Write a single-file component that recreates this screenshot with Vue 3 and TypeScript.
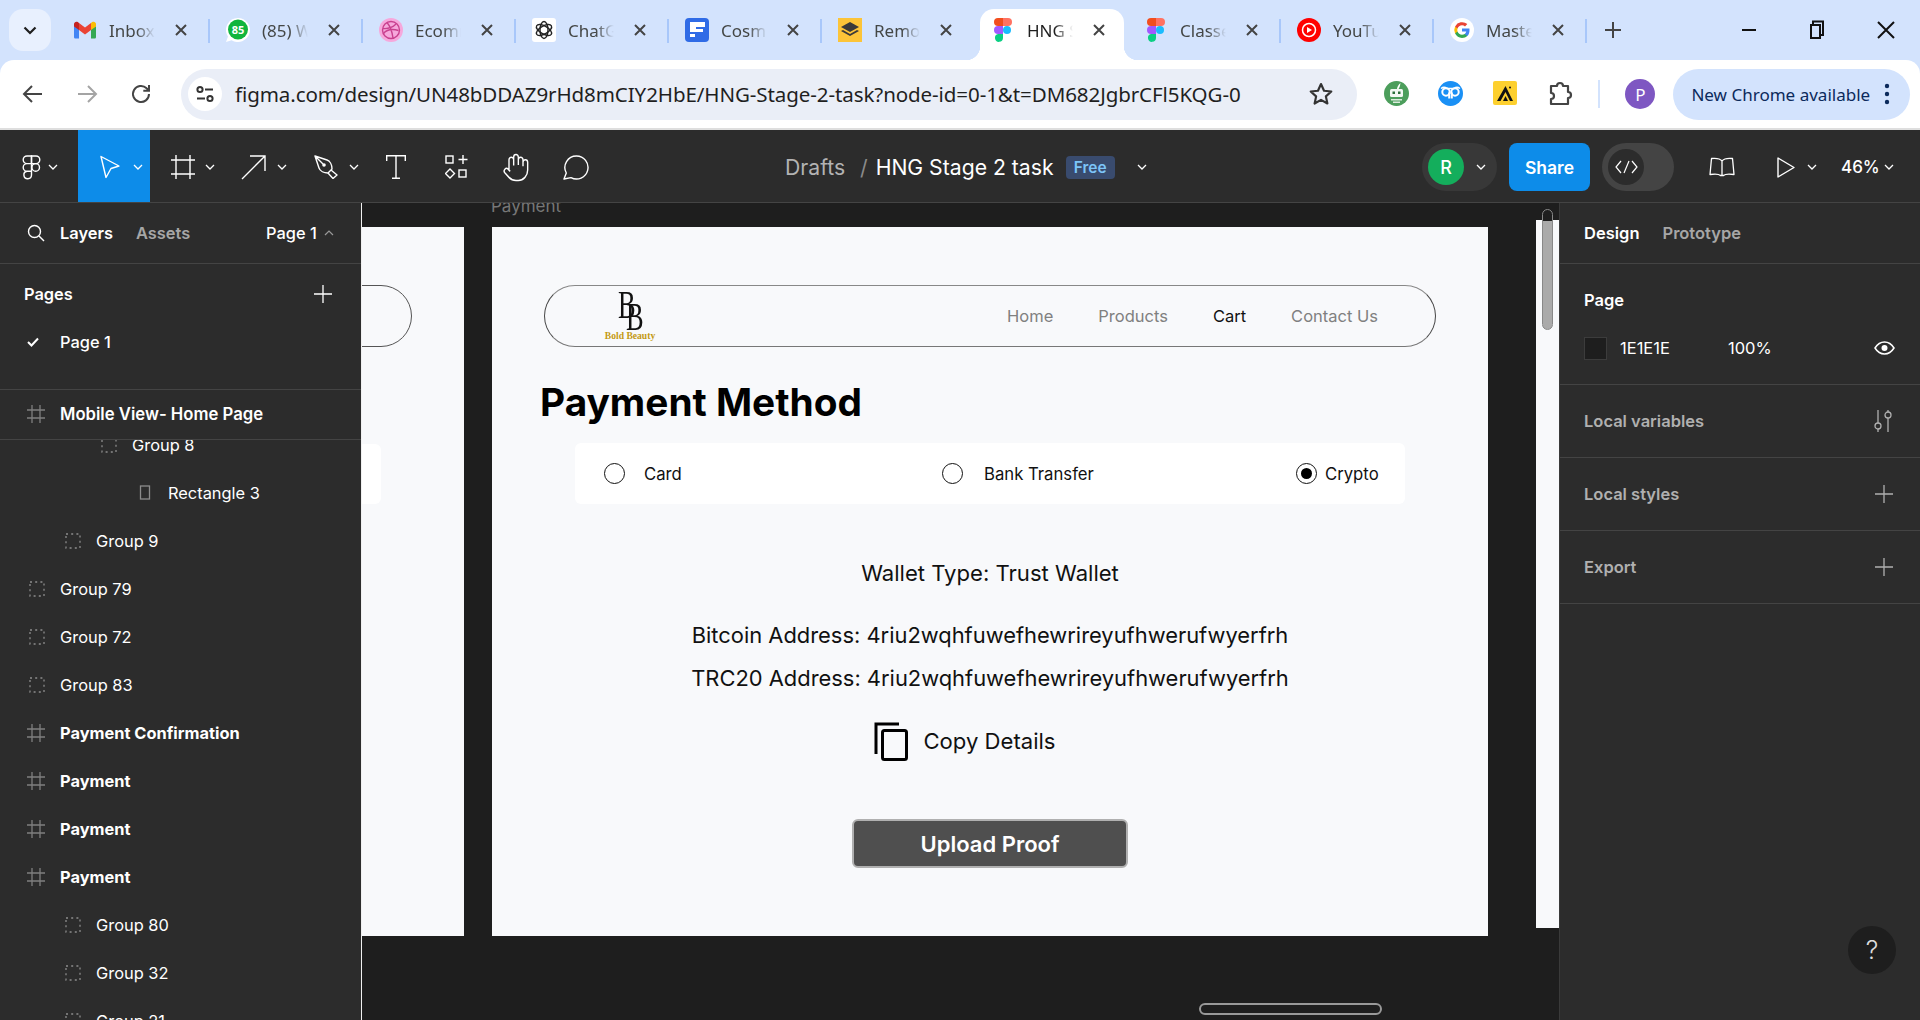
<script setup lang="ts">
interface Tab { title: string; icon: string; active?: boolean; noSep?: boolean }
const tabs: Tab[] = [
  { title: 'Inbox (2)', icon: 'gmail' },
  { title: '(85) WhatsApp', icon: 'whatsapp' },
  { title: 'Ecommerce', icon: 'dribbble' },
  { title: 'ChatGPT', icon: 'chatgpt' },
  { title: 'Cosmos', icon: 'cosmos' },
  { title: 'Remote', icon: 'remote', noSep: true },
  { title: 'HNG Stage', icon: 'figma', active: true, noSep: true },
  { title: 'Classes', icon: 'figma' },
  { title: 'YouTube', icon: 'youtube' },
  { title: 'Master', icon: 'google' },
]
interface Row { name: string; kind: 'group' | 'frame' | 'rect'; depth: number }
const rows: Row[] = [
  { name: 'Group 8', kind: 'group', depth: 2 },
  { name: 'Rectangle 3', kind: 'rect', depth: 3 },
  { name: 'Group 9', kind: 'group', depth: 1 },
  { name: 'Group 79', kind: 'group', depth: 0 },
  { name: 'Group 72', kind: 'group', depth: 0 },
  { name: 'Group 83', kind: 'group', depth: 0 },
  { name: 'Payment Confirmation', kind: 'frame', depth: 0 },
  { name: 'Payment', kind: 'frame', depth: 0 },
  { name: 'Payment', kind: 'frame', depth: 0 },
  { name: 'Payment', kind: 'frame', depth: 0 },
  { name: 'Group 80', kind: 'group', depth: 1 },
  { name: 'Group 32', kind: 'group', depth: 1 },
  { name: 'Group 21', kind: 'group', depth: 1 },
]
const navLinks = ['Home', 'Products', 'Cart', 'Contact Us']
const indent = (d: number) => ({ paddingLeft: `${29 + d * 36}px` })
</script>

<template>
  <div class="page">
    <!-- Chrome tab strip -->
    <div class="tabstrip">
      <div class="switcher">
        <svg width="14" height="9" viewBox="0 0 14 9"><path d="M1.5 1.5 7 7l5.5-5.5" fill="none" stroke="#1f1f1f" stroke-width="2.2"/></svg>
      </div>
      <div v-for="t in tabs" :key="t.title" class="tab" :class="{ active: t.active }">
        <template v-if="t.active">
          <span class="flare flare-l"></span><span class="flare flare-r"></span>
        </template>
        <span class="favicon">
          <svg v-if="t.icon === 'gmail'" width="24" height="18" viewBox="0 0 24 18"><path d="M1 5v11c0 1 .6 1.6 1.6 1.6H6V8z" fill="#4285f4"/><path d="M23 5v11c0 1-.6 1.6-1.6 1.6H18V8z" fill="#34a853"/><path d="M18 2v7l5-3.6V3c0-2-2.300-3-3.800-1.900z" fill="#fbbc04"/><path d="M6 9V2l6 4.500L18 2v7l-6 4.500z" fill="#ea4335"/><path d="M1 3v2.400L6 9V2L4.800 1.100C3.300 0 1 1 1 3z" fill="#c5221f"/></svg>
          <svg v-else-if="t.icon === 'whatsapp'" width="24" height="24" viewBox="0 0 24 24"><path d="M12 0a12 12 0 0 0-10 18.600L0 24l5.600-1.800A12 12 0 1 0 12 0z" fill="#fff"/><circle cx="12" cy="11.500" r="10" fill="#10b53d"/><text x="12" y="15.500" class="wa">85</text></svg>
          <svg v-else-if="t.icon === 'dribbble'" width="24" height="24" viewBox="0 0 24 24"><circle cx="12" cy="12" r="12" fill="#f6a8dc"/><g fill="none" stroke="#c9418f" stroke-width="1.400"><circle cx="12" cy="12" r="8.500"/><path d="M8 4.500c3 3.500 5 8 6 15.500M4 10.500c5 .5 9-.5 13-4.500M4.500 15.500c3-3.500 8-5 15-3"/></g></svg>
          <svg v-else-if="t.icon === 'chatgpt'" width="24" height="24" viewBox="0 0 24 24"><rect width="24" height="24" rx="3" fill="#fff"/><g fill="none" stroke="#222" stroke-width="1.400"><ellipse cx="12" cy="12" rx="4" ry="8.500"/><ellipse cx="12" cy="12" rx="4" ry="8.500" transform="rotate(60 12 12)"/><ellipse cx="12" cy="12" rx="4" ry="8.500" transform="rotate(120 12 12)"/></g></svg>
          <svg v-else-if="t.icon === 'cosmos'" width="24" height="24" viewBox="0 0 24 24"><rect width="24" height="24" rx="4" fill="#2f6be6"/><path d="M5 4h15v5h-9v2h7v3H5zM5 16h5v3H5z" fill="#fff"/></svg>
          <svg v-else-if="t.icon === 'remote'" width="24" height="24" viewBox="0 0 24 24"><rect width="24" height="24" fill="#fcc438"/><path d="m12 4 9 5-9 5-9-5z" fill="#3a3a3a"/><path d="m3 13 9 5 9-5-2-1-7 4-7-4z" fill="#3a3a3a"/></svg>
          <svg v-else-if="t.icon === 'figma'" width="24" height="24" viewBox="0 0 24 24"><path d="M7 0h5v8H7a4 4 0 0 1 0-8z" fill="#f24e1e"/><path d="M12 0h5a4 4 0 0 1 0 8h-5z" fill="#ff7262"/><path d="M7 8h5v8H7a4 4 0 0 1 0-8z" fill="#a259ff"/><circle cx="16" cy="12" r="4" fill="#1abcfe"/><path d="M7 16h5v4a4 4 0 1 1-5-4z" fill="#0acf83"/></svg>
          <svg v-else-if="t.icon === 'youtube'" width="24" height="24" viewBox="0 0 24 24"><circle cx="12" cy="12" r="12" fill="#f00"/><circle cx="12" cy="12" r="6.500" fill="none" stroke="#fff" stroke-width="1.500"/><path d="m10 9 5 3-5 3z" fill="#fff"/></svg>
          <svg v-else width="24" height="24" viewBox="0 0 24 24"><circle cx="12" cy="12" r="12" fill="#fff"/><path d="M19.500 12.200c0-.6 0-1.100-.1-1.600H12v3h4.300a3.700 3.700 0 0 1-1.600 2.400v2h2.600c1.500-1.400 2.200-3.400 2.200-5.800z" fill="#4285f4"/><path d="M12 20c2.200 0 4-.7 5.300-2l-2.600-2c-.7.500-1.600.8-2.700.8-2.100 0-3.800-1.400-4.500-3.300H5.100v2.100A8 8 0 0 0 12 20z" fill="#34a853"/><path d="M7.500 13.500a4.800 4.800 0 0 1 0-3V8.400H5.100a8 8 0 0 0 0 7.200z" fill="#fbbc04"/><path d="M12 7.200c1.200 0 2.200.4 3 1.200l2.300-2.300A8 8 0 0 0 5.100 8.400l2.400 2.100C8.200 8.600 9.900 7.200 12 7.200z" fill="#ea4335"/></svg>
        </span>
        <span class="tab-title">{{ t.title }}</span>
        <svg class="tab-x" width="14" height="14" viewBox="0 0 14 14"><path d="m2 2 10 10M12 2 2 12" stroke="#444" stroke-width="2"/></svg>
        <span v-if="!t.noSep" class="tab-sep"></span>
      </div>
      <svg class="newtab" width="18" height="18" viewBox="0 0 18 18"><path d="M9 1v16M1 9h16" stroke="#444" stroke-width="2"/></svg>
      <div class="winctl">
        <svg width="16" height="16" viewBox="0 0 16 16"><path d="M1 8h14" stroke="#111" stroke-width="2"/></svg>
        <svg width="16" height="20" viewBox="0 0 16 20"><path d="M4 5V1.500h10V15h-3M2 5h9v13H2z" fill="none" stroke="#111" stroke-width="2"/></svg>
        <svg width="18" height="18" viewBox="0 0 18 18"><path d="m1 1 16 16M17 1 1 17" stroke="#111" stroke-width="2"/></svg>
      </div>
    </div>

    <!-- Chrome toolbar -->
    <div class="toolbar">
      <div class="nav-btn"><svg width="24" height="24" viewBox="0 0 24 24"><path d="M21 12H4m7-8-8 8 8 8" fill="none" stroke="#444" stroke-width="2"/></svg></div>
      <div class="nav-btn"><svg width="24" height="24" viewBox="0 0 24 24"><path d="M3 12h17m-7-8 8 8-8 8" fill="none" stroke="#a4a4a4" stroke-width="2"/></svg></div>
      <div class="nav-btn"><svg width="24" height="24" viewBox="0 0 24 24"><path d="M20 12a8 8 0 1 1-2.400-5.700L20 8.500M20 3v5.700h-5.700" fill="none" stroke="#444" stroke-width="2"/></svg></div>
      <div class="address">
        <span class="site-ico"><svg width="20" height="20" viewBox="0 0 20 20"><g fill="none" stroke="#333" stroke-width="2"><circle cx="5" cy="5.500" r="2.600"/><path d="M10 5.500h8M2 14.500h8"/><circle cx="15" cy="14.500" r="2.600"/></g></svg></span>
        <span class="url">figma.com/design/UN48bDDAZ9rHd8mCIY2HbE/HNG-Stage-2-task?node-id=0-1&amp;t=DM682JgbrCFl5KQG-0</span>
        <svg class="star" width="26" height="26" viewBox="0 0 24 24"><path d="m12 2.800 2.800 6.200 6.700.7-5 4.500 1.400 6.600L12 17.400l-5.900 3.400 1.400-6.600-5-4.500 6.700-.7z" fill="none" stroke="#333" stroke-width="2" stroke-linejoin="round"/></svg>
      </div>
      <div class="exts">
        <span class="ext"><svg width="25" height="25" viewBox="0 0 25 25"><circle cx="12.500" cy="12.500" r="12.500" fill="#4c9e5c"/><path d="M13 8c.3-2.500 1.500-4.500 3.500-6-.3 2.500-1 4.500-2 6z" fill="#fff"/><rect x="6" y="8" width="13" height="8" rx="1.500" fill="#f2f8f3"/><rect x="8.500" y="10.500" width="2.500" height="2.500" fill="#2b6e3a"/><rect x="14" y="10.500" width="2.500" height="2.500" fill="#2b6e3a"/><path d="M7 18h11v1.500H7zM9 20.500h7V22H9z" fill="#dcebdd"/></svg></span>
        <span class="ext"><svg width="25" height="25" viewBox="0 0 25 25"><circle cx="12.500" cy="12.500" r="12.500" fill="#1a90f5"/><g fill="none" stroke="#fff" stroke-width="2"><circle cx="8" cy="11" r="3.700"/><circle cx="17" cy="11" r="3.700"/><path d="M11.200 11.500v6M13.800 11.500v6"/></g><path d="M3 7.500c2-1.500 4-1.500 6 0h7c2-1.500 4-1.500 6 0" fill="none" stroke="#fff" stroke-width="1.500"/></svg></span>
        <span class="ext"><svg width="24" height="24" viewBox="0 0 24 24"><rect width="24" height="24" rx="2" fill="#fdd02f"/><path d="M12.500 5 4 20h3.500l5-9 4.500 9h3z" fill="#111"/><path d="M12.500 15 10 20h5z" fill="#111"/><circle cx="17" cy="6.500" r="1" fill="#111"/></svg></span>
        <span class="ext"><svg width="26" height="26" viewBox="0 0 26 26"><path d="M4 5h6a3 3 0 0 1 6 0h5v6a3 3 0 0 1 0 6v6H4v-5a3 3 0 0 0 0-6z" fill="none" stroke="#444" stroke-width="2.200" stroke-linejoin="round"/></svg></span>
      </div>
      <span class="tb-sep"></span>
      <span class="profile">P</span>
      <div class="update">
        <span>New Chrome available</span>
        <svg width="6" height="22" viewBox="0 0 6 22"><circle cx="3" cy="3" r="2.200" fill="#0b2a5c"/><circle cx="3" cy="11" r="2.200" fill="#0b2a5c"/><circle cx="3" cy="19" r="2.200" fill="#0b2a5c"/></svg>
      </div>
    </div>

    <!-- Figma bar -->
    <div class="fbar">
      <div class="tool logo-tool">
        <svg width="19" height="25" viewBox="0 0 19 25" class="ico"><g fill="none" stroke="#fff" stroke-width="1.400"><path d="M9.500 1H5a3.800 3.800 0 0 0 0 7.600h4.500zM9.500 8.600H5a3.800 3.800 0 0 0 0 7.600h4.500zM9.500 16.200H5a3.800 3.800 0 1 0 4.500 3.800z"/><path d="M9.500 1H14a3.800 3.800 0 0 1 0 7.600H9.500z"/><circle cx="13.700" cy="12.400" r="3.800"/></g></svg>
        <svg class="chev" width="10" height="6" viewBox="0 0 10 6"><path d="m1 1 4 4 4-4" fill="none" stroke="#fff" stroke-width="1.300"/></svg>
      </div>
      <div class="tool tool-on">
        <svg width="20" height="24" viewBox="0 0 20 24" class="ico"><path d="M1 1.500 19 11l-8 2.500-5 9z" fill="none" stroke="#fff" stroke-width="1.400" stroke-linejoin="round"/></svg>
        <svg class="chev" width="10" height="6" viewBox="0 0 10 6"><path d="m1 1 4 4 4-4" fill="none" stroke="#fff" stroke-width="1.300"/></svg>
      </div>
      <div class="tool t-frame">
        <svg width="24" height="24" viewBox="0 0 24 24" class="ico"><path d="M0 5h24M0 19h24M5 0v24M19 0v24" stroke="#fff" stroke-width="1.400"/></svg>
        <svg class="chev" width="10" height="6" viewBox="0 0 10 6"><path d="m1 1 4 4 4-4" fill="none" stroke="#fff" stroke-width="1.300"/></svg>
      </div>
      <div class="tool t-arrow">
        <svg width="25" height="25" viewBox="0 0 25 25" class="ico"><path d="M1 24 24 1M9 1h15v15" fill="none" stroke="#fff" stroke-width="1.400"/></svg>
        <svg class="chev" width="10" height="6" viewBox="0 0 10 6"><path d="m1 1 4 4 4-4" fill="none" stroke="#fff" stroke-width="1.300"/></svg>
      </div>
      <div class="tool">
        <svg width="24" height="24" viewBox="0 0 24 24" class="ico"><g fill="none" stroke="#fff" stroke-width="1.400" stroke-linejoin="round"><path d="M1 1 13 5c3 1 5 5 5 9l-4 4c-4 0-8-2-9-5zM1 1l8 8"/><path d="m17 15 6 5-4 3.500-5-5.500"/></g><circle cx="10" cy="10" r="1.800" fill="#fff"/></svg>
        <svg class="chev" width="10" height="6" viewBox="0 0 10 6"><path d="m1 1 4 4 4-4" fill="none" stroke="#fff" stroke-width="1.300"/></svg>
      </div>
      <div class="tool-s">
        <svg width="20" height="24" viewBox="0 0 20 24"><path d="M.7 6V.7h18.600V6M10 .7v22.600M6 23.300h8" fill="none" stroke="#fff" stroke-width="1.400"/></svg>
      </div>
      <div class="tool-s">
        <svg width="23" height="24" viewBox="0 0 23 24"><g fill="none" stroke="#fff" stroke-width="1.400"><rect x="1" y="1" width="7" height="7"/><path d="M18 0v9M13.500 4.500h9"/><path d="m5 14 4.500 4.500L5 23 .5 18.500z"/><rect x="14" y="15" width="7" height="7"/></g></svg>
      </div>
      <div class="tool-s">
        <svg width="28" height="31" viewBox="0 0 24 24" preserveAspectRatio="none"><path d="M18 11V6a2 2 0 0 0-4 0M14 10V4a2 2 0 0 0-4 0v2M10 10.500V6a2 2 0 0 0-4 0v8M18 8a2 2 0 1 1 4 0v6a8 8 0 0 1-8 8h-2c-2.800 0-4.500-.86-5.990-2.340l-3.600-3.600a2 2 0 0 1 2.830-2.820L7 15" fill="none" stroke="#fff" stroke-width="1.200"/></svg>
      </div>
      <div class="tool-s">
        <svg width="26" height="25" viewBox="0 0 26 25"><path d="M13.500 1a11.500 11.500 0 1 1-5.500 21.600L1 24l2.300-6A11.500 11.500 0 0 1 13.500 1z" fill="none" stroke="#fff" stroke-width="1.400" stroke-linejoin="round"/></svg>
      </div>

      <div class="file">
        <span class="crumb">Drafts</span>
        <span class="slash">/</span>
        <span class="fname">HNG Stage 2 task</span>
        <span class="free">Free</span>
        <svg width="10" height="6" viewBox="0 0 10 6"><path d="m1 1 4 4 4-4" fill="none" stroke="#fff" stroke-width="1.300"/></svg>
      </div>

      <div class="fright">
        <div class="avatar-pill">
          <span class="avatar">R</span>
          <svg width="10" height="6" viewBox="0 0 10 6"><path d="m1 1 4 4 4-4" fill="none" stroke="#fff" stroke-width="1.300"/></svg>
        </div>
        <span class="share">Share</span>
        <div class="code-toggle">
          <span class="code-knob"><svg width="23" height="14" viewBox="0 0 23 14"><path d="M6 1 1 7l5 6M17 1l5 6-5 6M14 1 9 13" fill="none" stroke="#fff" stroke-width="1.200"/></svg></span>
        </div>
        <svg class="book" width="26" height="20" viewBox="0 0 26 20"><path d="M13 4C11 1.500 7 1 2.500 1.500L1 17.500c4-.5 9-.5 10.500 1h3c1.500-1.500 6.500-1.500 10.500-1L23.500 1.500C19 1 15 1.500 13 4zv14" fill="none" stroke="#fff" stroke-width="1.300" stroke-linejoin="round"/></svg>
        <svg class="play" width="18" height="21" viewBox="0 0 18 21"><path d="M1 1v19l16-9.500z" fill="none" stroke="#fff" stroke-width="1.400" stroke-linejoin="round"/></svg>
        <svg class="pchev" width="10" height="6" viewBox="0 0 10 6"><path d="m1 1 4 4 4-4" fill="none" stroke="#fff" stroke-width="1.300"/></svg>
        <span class="zoomv">46%</span>
        <svg width="10" height="6" viewBox="0 0 10 6"><path d="m1 1 4 4 4-4" fill="none" stroke="#fff" stroke-width="1.300"/></svg>
      </div>
    </div>

    <div class="main">
      <!-- Left panel -->
      <aside class="left">
        <div class="ltabs">
          <svg width="18" height="18" viewBox="0 0 18 18"><circle cx="7.500" cy="7.500" r="6" fill="none" stroke="#fff" stroke-width="1.400"/><path d="m12 12 5 5" stroke="#fff" stroke-width="1.400"/></svg>
          <span class="t-on">Layers</span>
          <span class="t-off">Assets</span>
          <span class="page-sel">Page 1</span>
          <svg width="10" height="6" viewBox="0 0 10 6"><path d="m1 5 4-4 4 4" fill="none" stroke="#999" stroke-width="1.200"/></svg>
        </div>
        <div class="pages">
          <div class="pages-head">
            <span>Pages</span>
            <svg width="18" height="18" viewBox="0 0 18 18"><path d="M9 0v18M0 9h18" stroke="#fff" stroke-width="1.300"/></svg>
          </div>
          <div class="page-row">
            <svg width="12" height="10" viewBox="0 0 12 10"><path d="m1 5 3.500 3.500L11 1.500" fill="none" stroke="#fff" stroke-width="2"/></svg>
            <span>Page 1</span>
          </div>
        </div>
        <div class="pinned">
          <svg width="18" height="18" viewBox="0 0 18 18"><path d="M0 5h18M0 13h18M5 0v18M13 0v18" stroke="#7f7f7f" stroke-width="1.300"/></svg>
          <span>Mobile View- Home Page</span>
        </div>
        <div class="layers">
          <div v-for="(r, i) in rows" :key="i" class="layer" :class="{ bold: r.kind === 'frame' }" :style="indent(r.depth)">
            <svg v-if="r.kind === 'group'" class="lico" width="16" height="16" viewBox="0 0 16 16"><rect x="1" y="1" width="14" height="14" fill="none" stroke="#8c8c8c" stroke-width="1.300" stroke-dasharray="2 3.200"/></svg>
            <svg v-else-if="r.kind === 'frame'" class="lico" width="18" height="18" viewBox="0 0 18 18"><path d="M0 5h18M0 13h18M5 0v18M13 0v18" stroke="#7f7f7f" stroke-width="1.300"/></svg>
            <svg v-else class="lico" width="16" height="16" viewBox="0 0 16 16"><rect x="3.500" y="1" width="9" height="13" fill="none" stroke="#8c8c8c" stroke-width="1.300"/></svg>
            <span>{{ r.name }}</span>
          </div>
        </div>
      </aside>

      <!-- Canvas -->
      <section class="canvas">
        <div class="frame frame-a">
          <div class="ghost-nav"></div>
          <div class="ghost-box"></div>
        </div>
        <span class="frame-label">Payment</span>
        <div class="frame frame-b">
          <div class="site-nav">
            <div class="brand">
              <div class="letters"><span class="b1">B</span><span class="b2">B</span></div>
              <span class="bname">Bold Beauty</span>
            </div>
            <nav class="links">
              <span v-for="l in navLinks" :key="l" :class="{ cur: l === 'Cart' }">{{ l }}</span>
            </nav>
          </div>
          <h1 class="title">Payment Method</h1>
          <div class="methods">
            <div class="method m-card"><span class="radio"></span><span>Card</span></div>
            <div class="method m-bank"><span class="radio"></span><span>Bank Transfer</span></div>
            <div class="method m-crypto"><span class="radio on"></span><span>Crypto</span></div>
          </div>
          <p class="wallet">Wallet Type: Trust Wallet</p>
          <p class="addr a1">Bitcoin Address: 4riu2wqhfuwefhewrireyufhwerufwyerfrh</p>
          <p class="addr a2">TRC20 Address: 4riu2wqhfuwefhewrireyufhwerufwyerfrh</p>
          <div class="copy">
            <svg width="34" height="39" viewBox="0 0 34 39"><path d="M2 32V2h23" fill="none" stroke="#000" stroke-width="3"/><rect x="8.500" y="8.500" width="24" height="29" rx="2" fill="none" stroke="#000" stroke-width="3"/></svg>
            <span>Copy Details</span>
          </div>
          <button class="upload" type="button">Upload Proof</button>
        </div>
        <div class="frame frame-c"></div>
        <div class="vthumb"></div>
        <div class="hthumb"></div>
      </section>

      <!-- Right panel -->
      <aside class="right">
        <div class="rtabs"><span class="t-on">Design</span><span class="t-off">Prototype</span></div>
        <div class="rpage">
          <div class="rp-title">Page</div>
          <div class="rp-row">
            <span class="swatch"></span>
            <span class="hex">1E1E1E</span>
            <span class="pct">100%</span>
            <svg class="eye" width="21" height="14" viewBox="0 0 21 14"><path d="M1 7c2.500-4 5.800-6 9.500-6s7 2 9.500 6c-2.500 4-5.800 6-9.500 6S3.500 11 1 7z" fill="none" stroke="#fff" stroke-width="1.500"/><circle cx="10.500" cy="7" r="3" fill="#fff"/></svg>
          </div>
        </div>
        <div class="rsec">
          <span>Local variables</span>
          <svg width="20" height="22" viewBox="0 0 20 22"><g fill="none" stroke="#b0b0b0" stroke-width="1.300"><path d="M5 0v13M5 19v3M15 0v2M15 8v14"/><circle cx="5" cy="16" r="3"/><circle cx="15" cy="5" r="3"/></g></svg>
        </div>
        <div class="rsec">
          <span>Local styles</span>
          <svg width="18" height="18" viewBox="0 0 18 18"><path d="M9 0v18M0 9h18" stroke="#b0b0b0" stroke-width="1.300"/></svg>
        </div>
        <div class="rsec">
          <span>Export</span>
          <svg width="18" height="18" viewBox="0 0 18 18"><path d="M9 0v18M0 9h18" stroke="#b0b0b0" stroke-width="1.300"/></svg>
        </div>
        <span class="help">?</span>
      </aside>
    </div>
  </div>
</template>

<style>
html, body { margin: 0; padding: 0; background: #2c2c2c; overflow: hidden; }
</style>

<style scoped>
.page { width: 1920px; height: 1020px; display: flex; flex-direction: column; overflow: hidden; background: #d3e3fd; font-family: Inter, "Liberation Sans", sans-serif; }

/* tab strip */
.tabstrip { height: 60px; flex: none; background: #d3e3fd; display: flex; align-items: center; padding-left: 9px; box-sizing: border-box; }
.switcher { width: 42px; height: 42px; border-radius: 14px; background: #e8f0fe; display: flex; align-items: center; justify-content: center; margin-right: 6px; flex: none; }
.tab { width: 153px; height: 60px; flex: none; display: flex; align-items: center; position: relative; padding-left: 16px; box-sizing: border-box; }
.tab.active::before { content: ""; position: absolute; left: 5px; right: 4px; top: 9px; bottom: 0; background: #fff; border-radius: 14px 14px 0 0; }
.flare { position: absolute; bottom: 0; width: 14px; height: 14px; }
.flare-l { left: -9px; background: radial-gradient(circle at 0 0, transparent 14px, #fff 14.500px); }
.flare-r { right: -10px; background: radial-gradient(circle at 100% 0, transparent 14px, #fff 14.500px); }
.favicon { width: 24px; height: 24px; display: flex; align-items: center; justify-content: center; flex: none; position: relative; margin-right: 12px; }
.wa { font: 700 11px "Open Sans", sans-serif; fill: #fff; text-anchor: middle; }
.tab-title { width: 46px; overflow: hidden; white-space: nowrap; font: 400 17px "Noto Sans", sans-serif; color: #444746; position: relative; -webkit-mask-image: linear-gradient(90deg, #000 60%, transparent); mask-image: linear-gradient(90deg, #000 60%, transparent); flex: none; }
.tab.active .tab-title { color: #1f1f1f; }
.tab-x { flex: none; margin-left: 19px; position: relative; }
.tab-sep { position: absolute; right: 0; top: 19px; width: 2px; height: 24px; background: #a8c7fa; }
.newtab { margin-left: 17px; flex: none; }
.winctl { margin-left: auto; display: flex; align-items: center; gap: 52px; padding-right: 25px; }

/* toolbar */
.toolbar { height: 70px; flex: none; background: #fff; border-radius: 14px 14px 0 0; border-bottom: 2px solid #dedede; box-sizing: border-box; display: flex; align-items: center; padding-left: 6px; }
.nav-btn { width: 54px; display: flex; justify-content: center; flex: none; }
.address { margin-left: 13px; width: 1176px; height: 51px; border-radius: 26px; background: #eaeef7; display: flex; align-items: center; padding-left: 7px; box-sizing: border-box; flex: none; }
.site-ico { width: 34px; height: 34px; border-radius: 50%; background: #fff; display: flex; align-items: center; justify-content: center; flex: none; }
.url { margin-left: 13px; font: 400 20.550px "Noto Sans", sans-serif; color: #1f1f1f; white-space: nowrap; letter-spacing: -.1px; }
.star { margin-left: auto; margin-right: 23px; flex: none; }
.exts { margin-left: 12px; display: flex; flex: none; }
.ext { width: 54.600px; display: flex; justify-content: center; }
.tb-sep { width: 2px; height: 28px; background: #d3e3fd; margin-left: 11px; flex: none; }
.profile { width: 30px; height: 30px; border-radius: 50%; background: #7e57c2; color: #fff; font: 400 17px "Noto Sans", sans-serif; display: flex; align-items: center; justify-content: center; margin-left: 25px; flex: none; }
.update { margin-left: 18px; width: 237px; height: 51px; border-radius: 26px; background: #d3e3fd; display: flex; align-items: center; padding-left: 18px; box-sizing: border-box; font: 400 17.050px "Noto Sans", sans-serif; color: #0b2a5c; white-space: nowrap; gap: 14px; flex: none; }

/* figma bar */
.fbar { height: 73px; flex: none; background: #2c2c2c; border-bottom: 1px solid #444; box-sizing: border-box; display: flex; align-items: center; color: #fff; }
.tool { width: 72px; height: 72px; flex: none; display: flex; align-items: center; position: relative; padding: 2px 0 0 20px; box-sizing: border-box; }
.logo-tool { width: 78px; padding-left: 22px; }
.tool-on { background: #0d8ce9; padding-left: 22px; }
.t-frame { padding-left: 21px; }
.t-arrow { padding-left: 19px; }
.chev { position: absolute; left: 55px; top: 34px; }
.logo-tool .chev { left: 48px; }
.tool-s { width: 60px; height: 72px; flex: none; display: flex; align-items: center; justify-content: center; padding-top: 2px; box-sizing: border-box; }
.file { margin-left: 179px; display: flex; align-items: center; font-size: 21.200px; flex: none; margin-top: 2px; }
.crumb { color: #b3b3b3; width: 60px; }
.slash { color: #8a8a8a; margin-left: 15px; }
.fname { margin-left: 8px; width: 177px; white-space: nowrap; }
.free { margin-left: 13px; width: 49px; height: 23px; border-radius: 4px; background: #394b6e; color: #7cc4f8; font-size: 15.500px; font-weight: 600; display: flex; align-items: center; justify-content: center; margin-right: 22px; }
.fright { margin-left: auto; display: flex; align-items: center; flex: none; padding-right: 26px; margin-top: 2px; }
.avatar-pill { width: 75px; height: 48px; border-radius: 24px; background: #383838; display: flex; align-items: center; padding-left: 6px; box-sizing: border-box; gap: 12px; }
.avatar { width: 36px; height: 36px; border-radius: 50%; background: #14ae5c; display: flex; align-items: center; justify-content: center; font-size: 18px; font-weight: 500; }
.share { margin-left: 12px; width: 81px; height: 48px; border-radius: 8px; background: #0d8ce9; display: flex; align-items: center; justify-content: center; font-size: 17.500px; font-weight: 600; }
.code-toggle { margin-left: 12px; width: 72px; height: 48px; border-radius: 24px; background: #444; display: flex; align-items: center; padding-left: 6px; box-sizing: border-box; }
.code-knob { width: 36px; height: 36px; border-radius: 50%; background: #2c2c2c; display: flex; align-items: center; justify-content: center; }
.book { margin-left: 35px; }
.play { margin-left: 42px; }
.pchev { margin-left: 12px; }
.zoomv { margin-left: 24px; font-size: 17px; font-weight: 500; width: 35px; margin-right: 8px; }

/* main */
.main { flex: 1; display: flex; min-height: 0; }
.left { width: 362px; flex: none; background: #2c2c2c; border-right: 1.500px solid #f0f0f0; box-sizing: border-box; color: #fff; font-size: 16.400px; display: flex; flex-direction: column; overflow: hidden; }
.ltabs { height: 61px; flex: none; border-bottom: 1px solid #444; box-sizing: border-box; display: flex; align-items: center; padding-left: 27px; }
.t-on { font-weight: 600; color: #fff; }
.t-off { font-weight: 600; color: #a6a6a6; }
.ltabs .t-on { margin-left: 15px; width: 76px; }
.ltabs .t-off { width: 130px; }
.page-sel { font-weight: 500; margin-right: 7px; }
.pages { flex: none; height: 126px; border-bottom: 1px solid #444; box-sizing: border-box; padding-top: 6px; }
.pages-head { height: 48px; display: flex; align-items: center; justify-content: space-between; padding: 0 29px 0 24px; font-weight: 600; }
.page-row { height: 48px; display: flex; align-items: center; padding-left: 27px; gap: 21px; font-weight: 500; }
.pinned { flex: none; height: 50px; padding-bottom: 2px; border-bottom: 1px solid #444; box-sizing: border-box; display: flex; align-items: center; padding-left: 27px; gap: 15px; font-weight: 600; font-size: 16.700px; }
.layers { flex: 1; overflow: hidden; }
.layer { height: 48px; display: flex; align-items: center; font-weight: 400; white-space: nowrap; box-sizing: border-box; margin-top: 0; }
.layer:first-child { margin-top: -19px; }
.layer.bold { font-weight: 700; }
.lico { flex: none; margin-right: 15px; }
.layer.bold .lico { margin-left: -2px; margin-right: 15px; }

/* canvas */
.canvas { flex: 1; background: #1e1e1e; position: relative; overflow: hidden; }
.frame { position: absolute; background: #f8f9fb; box-sizing: border-box; }
.frame-a { left: -200px; top: 24px; width: 302px; height: 709px; }
.ghost-nav { position: absolute; right: 52px; top: 58px; width: 300px; height: 62px; border: 1px solid #555; border-radius: 31px; box-sizing: border-box; }
.ghost-box { position: absolute; right: 83px; top: 217px; width: 200px; height: 60px; background: #fff; border-radius: 6px; }
.frame-label { position: absolute; left: 129px; top: -7px; font-size: 17px; color: #777; }
.frame-b { left: 130px; top: 24px; width: 996px; height: 709px; padding-top: 58px; display: flex; flex-direction: column; }
.frame-c { left: 1174px; top: 17px; width: 40px; height: 708px; }
.vthumb { position: absolute; left: 1180px; top: 6px; width: 11px; height: 121px; border-radius: 6px; background: linear-gradient(#1e1e1e 11px, #aaa 11px); border: 1px solid #888; box-sizing: border-box; }
.hthumb { position: absolute; left: 837px; top: 800px; width: 183px; height: 12px; border-radius: 6px; border: 2px solid #999; box-sizing: border-box; }

.site-nav { margin-left: 52px; width: 892px; height: 62px; flex: none; border: 1px solid #444; border-top-color: #888; border-bottom-color: #777; border-radius: 31px; box-sizing: border-box; display: flex; align-items: flex-start; justify-content: space-between; padding: 0 57px 0 60px; }
.brand { display: flex; flex-direction: column; align-items: center; width: 50px; padding-top: 7px; }
.letters { width: 24px; height: 37px; position: relative; }
.b1, .b2 { position: absolute; font: 400 40px/1 "Liberation Serif", serif; color: #111; transform: scaleX(.66); transform-origin: 0 0; }
.b1 { left: 0; top: -8px; }
.b2 { left: 8px; top: 4px; }
.bname { font: 700 9.600px/11px "Liberation Serif", serif; color: #c49a12; white-space: nowrap; position: relative; }
.links { display: flex; gap: 45px; font-size: 16.500px; color: #808080; align-self: center; }
.links .cur { color: #111; }
.title { margin: 29px 0 15px 48px; font-size: 38.800px; line-height: 52px; font-weight: 700; color: #000; }
.methods { margin-left: 83px; width: 830px; height: 61px; flex: none; background: #fff; border-radius: 6px; display: grid; grid-template-columns: 338px 354px 1fr; padding-left: 29px; box-sizing: border-box; align-items: center; font-size: 16.700px; color: #111; }
.method { display: flex; align-items: center; }
.m-card { gap: 19px; }
.m-bank { gap: 21px; }
.m-crypto { gap: 8px; }
.radio { width: 21px; height: 21px; border-radius: 50%; border: 1px solid #111; box-sizing: border-box; background: #fff; flex: none; position: relative; }
.radio.on::after { content: ""; position: absolute; left: 4px; top: 4px; width: 11px; height: 11px; border-radius: 50%; background: #000; }
.wallet, .addr { margin: 0; text-align: center; font-size: 21.900px; line-height: 30px; color: #111; }
.wallet { margin-top: 54px; font-size: 22.100px; }
.a1 { margin-top: 32px; }
.a2 { margin-top: 13px; }
.copy { margin-top: 29px; height: 38px; display: flex; align-items: center; justify-content: center; gap: 15px; font-size: 22.100px; color: #111; padding-right: 50px; }
.upload { align-self: center; margin-top: 59px; width: 276px; height: 49px; background: #4f4f4f; border: 2px solid #b0b0b0; border-radius: 6px; color: #fff; font: 600 22px Inter, sans-serif; }

/* right */
.right { width: 361px; flex: none; background: #2c2c2c; color: #fff; font-size: 16.500px; position: relative; border-left: 1px solid #3a3a3a; box-sizing: border-box; }
.rtabs { height: 61px; border-bottom: 1px solid #444; box-sizing: border-box; display: flex; align-items: center; padding-left: 24px; gap: 23px; }
.rpage { height: 121px; border-bottom: 1px solid #444; box-sizing: border-box; padding: 24px 0 0 24px; }
.rp-title { font-weight: 600; line-height: 24px; }
.rp-row { display: flex; align-items: center; margin-top: 24px; height: 24px; }
.swatch { width: 23px; height: 23px; background: #1e1e1e; border: 1px solid #3c3c3c; box-sizing: border-box; }
.hex { margin-left: 13px; width: 108px; font-weight: 400; }
.pct { font-weight: 400; }
.eye { margin-left: auto; margin-right: 25px; }
.rsec { height: 73px; border-bottom: 1px solid #444; box-sizing: border-box; display: flex; align-items: center; justify-content: space-between; padding: 0 27px 0 24px; font-weight: 600; color: #b0b0b0; }
.help { position: absolute; left: 288px; top: 723px; width: 48px; height: 48px; border-radius: 50%; background: #1e1e1e; display: flex; align-items: center; justify-content: center; font-size: 25px; font-weight: 300; color: #ddd; }
</style>
